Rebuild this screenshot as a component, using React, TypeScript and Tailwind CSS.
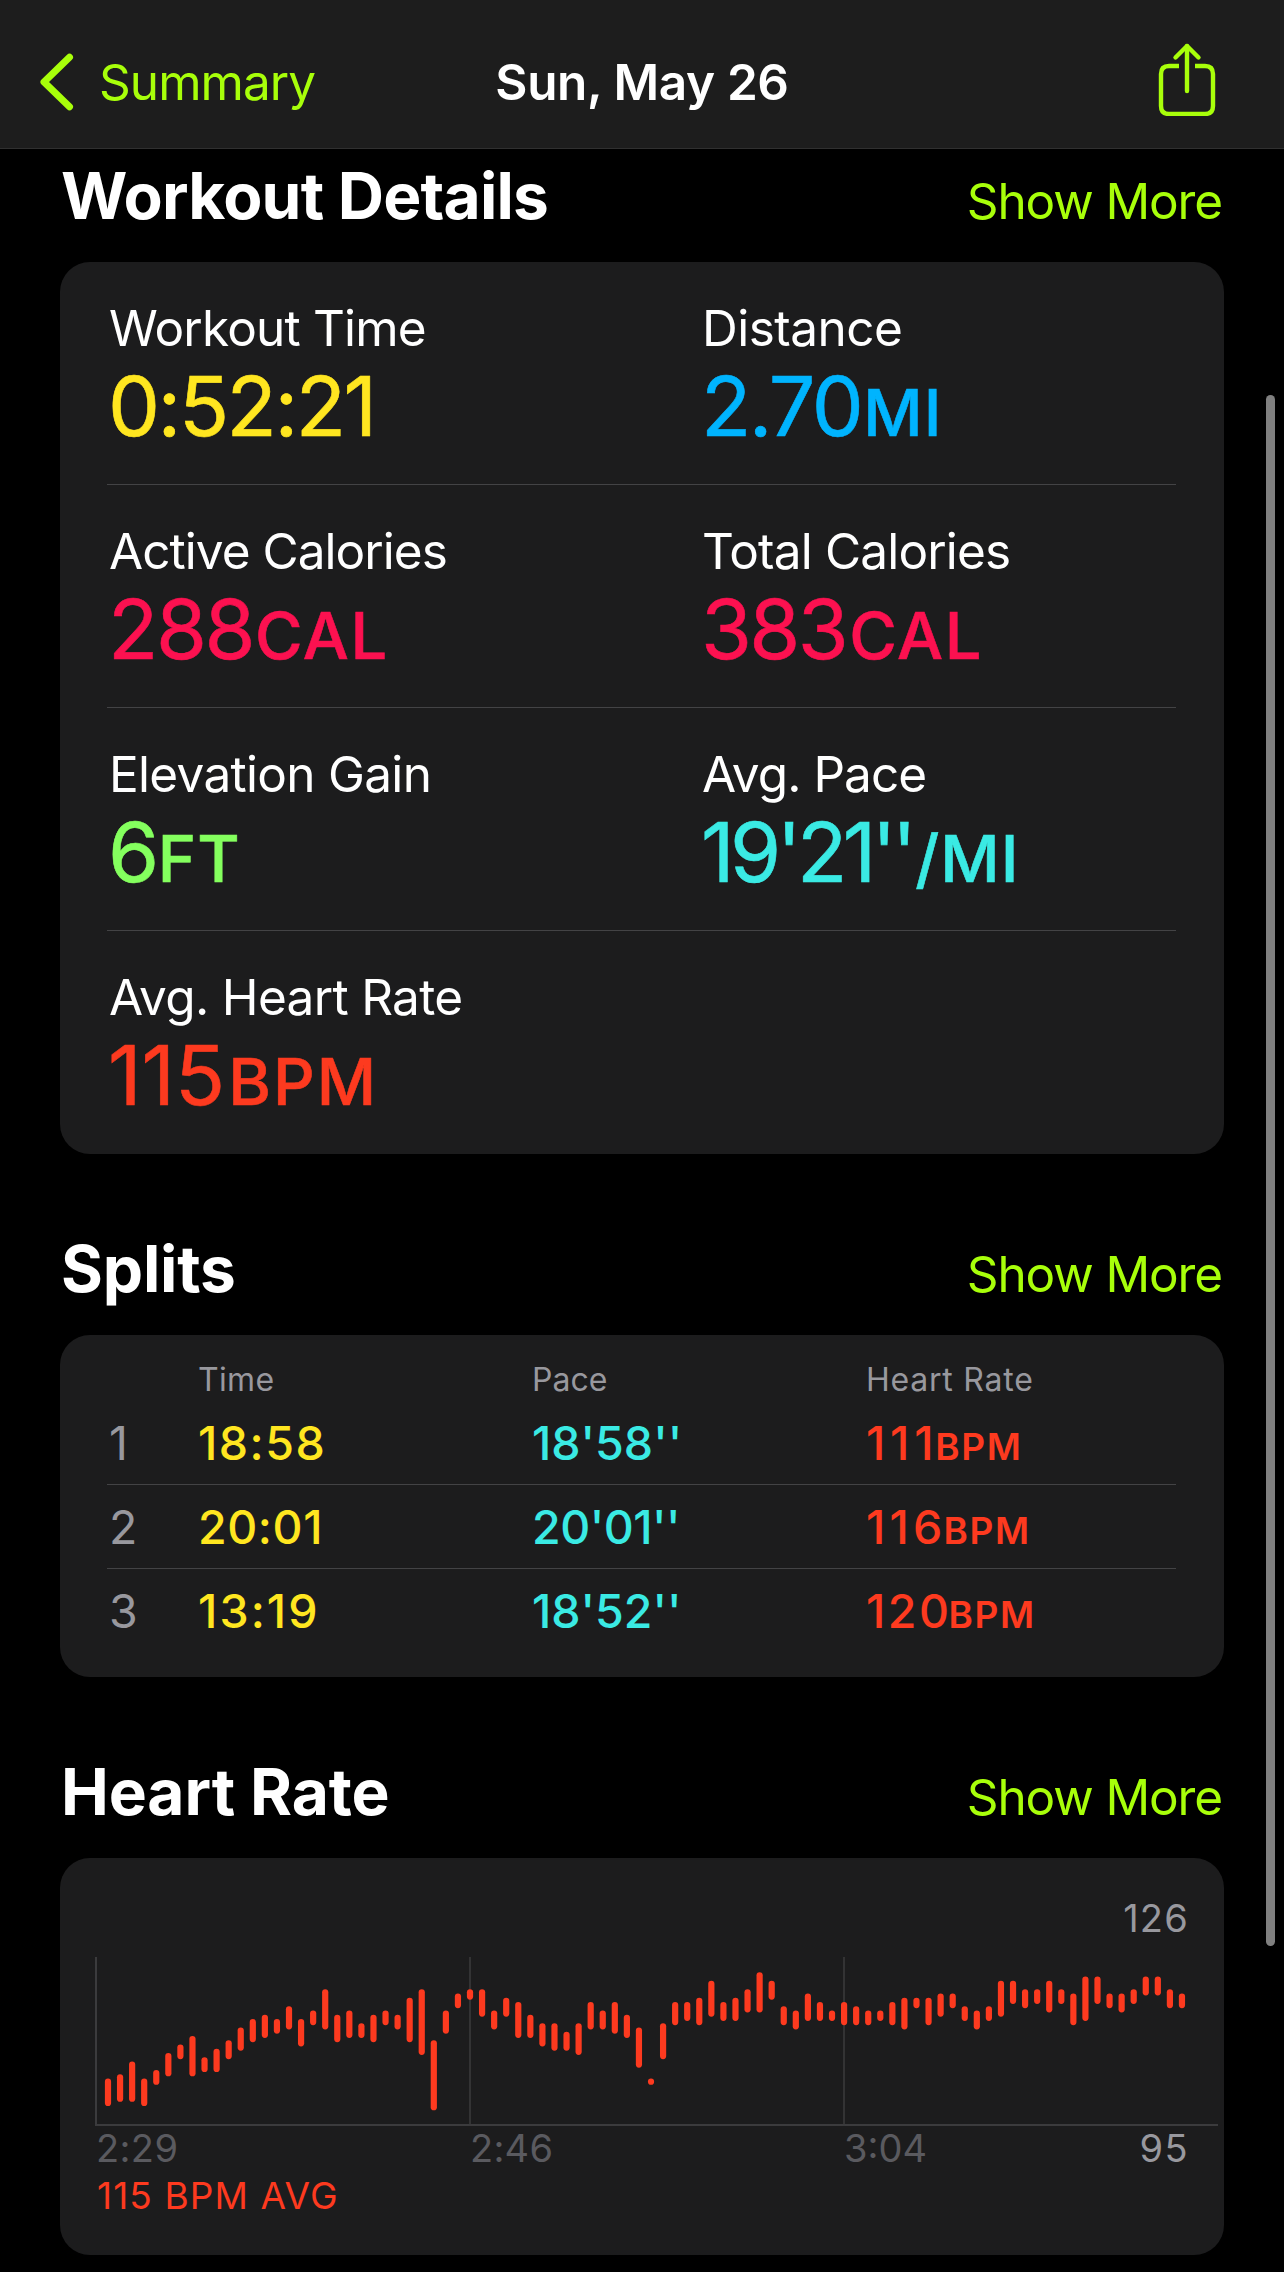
import React from 'react'

interface Metric {
  label: string
  labelClass: string
  value: string
  valueClass: string
  unit?: string
  unitClass?: string
}

const METRICS: Metric[] = [
  {
    label: 'Workout Time',
    labelClass: 'tracking-[-0.82px]',
    value: '0:52:21',
    valueClass: 'text-[#ffe620] tracking-[-2.46px]',
  },
  {
    label: 'Distance',
    labelClass: 'tracking-[-0.5px]',
    value: '2.70',
    valueClass: 'text-[#00b4fe] tracking-[-2.54px]',
    unit: 'MI',
    unitClass: 'text-[#00b4fe] tracking-[1.28px] ml-0.5',
  },
  {
    label: 'Active Calories',
    labelClass: 'tracking-[-0.96px]',
    value: '288',
    valueClass: 'text-[#fc1150] tracking-[-2.43px]',
    unit: 'CAL',
    unitClass: 'text-[#fc1150] tracking-[1.5px] ml-0.5',
  },
  {
    label: 'Total Calories',
    labelClass: 'tracking-[-0.83px]',
    value: '383',
    valueClass: 'text-[#fc1150] tracking-[-2.6px]',
    unit: 'CAL',
    unitClass: 'text-[#fc1150] tracking-[1.69px] ml-[3px]',
  },
  {
    label: 'Elevation Gain',
    labelClass: 'tracking-[-0.7px]',
    value: '6',
    valueClass: 'text-[#84ff5e] tracking-[-2.5px]',
    unit: 'FT',
    unitClass: 'text-[#84ff5e] tracking-[1.39px] ml-px',
  },
  {
    label: 'Avg. Pace',
    labelClass: 'tracking-[-0.95px]',
    value: "19'21''",
    valueClass: 'text-[#3aeae4] tracking-[-4.5px]',
    unit: '/MI',
    unitClass: 'text-[#3aeae4] tracking-[1px] ml-[3px]',
  },
  {
    label: 'Avg. Heart Rate',
    labelClass: 'tracking-[-0.68px]',
    value: '115',
    valueClass: 'text-[#fd3a1f]',
    unit: 'BPM',
    unitClass: 'text-[#fd3a1f] tracking-[2px] ml-[3px]',
  },
]

const SPLITS = [
  {
    time: '18:58',
    timeClass: 'tracking-[1.5px]',
    pace: "18'58''",
    paceClass: 'tracking-[0px]',
    bpm: '111',
    bpmClass: 'tracking-[4.8px]',
  },
  {
    time: '20:01',
    timeClass: 'tracking-[0.6px]',
    pace: "20'01''",
    paceClass: 'tracking-[-0.5px]',
    bpm: '116',
    bpmClass: 'tracking-[4.2px]',
  },
  {
    time: '13:19',
    timeClass: 'tracking-[2.1px]',
    pace: "18'52''",
    paceClass: 'tracking-[0px]',
    bpm: '120',
    bpmClass: 'tracking-[2.52px]',
  },
]

// [high, low] bpm for each sample
const HEART_RATE: [number, number][] = [
  [101, 96], [102, 97], [105, 97], [101, 96], [103, 101], [107, 103], [109, 107], [111, 103],
  [106, 104], [108, 104], [110, 107], [113, 109], [115, 111], [116, 112], [115, 113], [118, 114],
  [115, 110], [117, 115], [122, 114], [116, 111], [117, 112], [114, 112], [116, 111], [117, 115],
  [116, 114], [120, 111], [122, 108], [110, 95], [117, 113], [121, 119], [122, 121], [122, 117],
  [117, 114], [120, 117], [119, 112], [116, 112], [114, 110], [114, 109], [112, 109], [114, 108],
  [119, 114], [117, 114], [119, 113], [116, 112], [113, 105], [101, 101], [114, 107], [119, 115],
  [119, 116], [120, 115], [124, 117], [119, 116], [120, 116], [122, 118], [126, 118], [124, 121],
  [118, 115], [117, 114], [121, 116], [119, 116], [117, 116], [119, 115], [118, 115], [117, 115],
  [117, 116], [119, 115], [120, 114], [120, 119], [120, 115], [121, 117], [121, 119], [118, 116],
  [117, 114], [118, 116], [124, 117], [124, 120], [122, 119], [122, 120], [124, 118], [122, 120],
  [121, 115], [125, 116], [125, 120], [121, 119], [121, 118], [122, 120], [125, 122], [125, 122],
  [122, 119], [121, 119],
]

const barX = (i: number) => 12 + i * 12.067
const barY = (bpm: number) => 18.3 + (126 - bpm) * 4.253

function HeartRateChart() {
  return (
    <svg width="1123" height="170" viewBox="0 0 1123 170" className="mt-[19px] ml-9 block overflow-visible">
      <g stroke="#3b3b3d" strokeWidth="2">
        <path d="M-1 168H1122" />
        <path d="M0 0V169" />
        <path d="M374 0V169" strokeWidth="1.5" />
        <path d="M748 0V169" strokeWidth="1.5" />
      </g>
      <g stroke="#fd3a1f" strokeWidth="6.2" strokeLinecap="round">
        {HEART_RATE.map(([high, low], i) => (
          <line key={i} x1={barX(i)} x2={barX(i)} y1={barY(high)} y2={barY(low) + 0.01} />
        ))}
      </g>
    </svg>
  )
}

interface SectionProps {
  title: string
  titleClass: string
  children: React.ReactNode
}

function Section({ title, titleClass, children }: SectionProps) {
  return (
    <section>
      <div className="flex items-baseline justify-between h-16 mb-[34px] pl-px pr-0.5">
        <h2 className={`text-[64px] leading-[64px] font-bold text-white ${titleClass}`}>{title}</h2>
        <a href="#" className="text-[49.5px] leading-[50px] tracking-[-1.12px] text-[#a8ff0a]">
          Show More
        </a>
      </div>
      <div className="bg-[#1c1c1d] rounded-[30px] overflow-hidden">{children}</div>
    </section>
  )
}

function MetricCell({ metric }: { metric: Metric }) {
  return (
    <div className="pt-[41px]">
      <p className={`text-[49.5px] leading-[50px] text-white ${metric.labelClass}`}>{metric.label}</p>
      <p className="mt-[13px] -ml-px flex items-baseline h-20 [-webkit-text-stroke:0.6px]">
        <span className={`text-[82.5px] leading-[80px] ${metric.valueClass}`}>{metric.value}</span>
        {metric.unit && (
          <span className={`text-[65px] leading-[65px] font-medium ${metric.unitClass}`}>{metric.unit}</span>
        )}
      </p>
    </div>
  )
}

export default function App() {
  const rows = [METRICS.slice(0, 2), METRICS.slice(2, 4), METRICS.slice(4, 6), METRICS.slice(6)]

  return (
    <div className="relative w-[1284px] h-[2272px] overflow-hidden bg-black font-['Inter',sans-serif] whitespace-nowrap">
      {/* Nav bar */}
      <header className="h-[149px] pt-4 px-10 grid grid-cols-[1fr_auto_1fr] items-center bg-[#1d1d1d] border-b border-[#303030]">
        <a href="#" className="flex items-center text-[#a8ff0a]">
          <svg width="34" height="58" viewBox="0 0 34 58" fill="none" className="shrink-0">
            <path
              d="M29.5 4.2L4 29L29.5 53.8"
              stroke="currentColor"
              strokeWidth="7"
              strokeLinecap="round"
              strokeLinejoin="round"
            />
          </svg>
          <span className="ml-[25px] text-[49.5px] leading-[50px] tracking-[-0.95px]">Summary</span>
        </a>
        <h1 className="text-[49.5px] leading-[50px] font-semibold tracking-[-0.37px] text-white">Sun, May 26</h1>
        <a href="#" className="justify-self-end -mt-1.5 mr-[27px] text-[#a8ff0a]">
          <svg width="60" height="74" viewBox="0 0 60 74" fill="none">
            <g stroke="currentColor" strokeWidth="4.4" strokeLinecap="round" strokeLinejoin="round">
              <path d="M30 4V49" />
              <path d="M18.5 15.5L30 4L41.5 15.5" />
            </g>
            <path
              d="M22 24H12Q4 24 4 32V64Q4 72 12 72H48Q56 72 56 64V32Q56 24 48 24H38"
              stroke="currentColor"
              strokeWidth="4.4"
            />
          </svg>
        </a>
      </header>

      <main className="pt-[15px] px-[60px] flex flex-col gap-[83px]">
        <Section title="Workout Details" titleClass="tracking-[-0.77px]">
          <div className="ml-[47px] mr-12 divide-y divide-[#434345]">
            {rows.map((row, i) => (
              <div key={i} className="h-[223px] pl-0.5 grid grid-cols-[593px_1fr]">
                {row.map((metric) => (
                  <MetricCell key={metric.label} metric={metric} />
                ))}
              </div>
            ))}
          </div>
        </Section>

        <Section title="Splits" titleClass="tracking-[-0.18px]">
          <div className="ml-[47px] mr-12 pt-[29px] pb-6">
            <div className="h-[37px] grid grid-cols-[91px_334px_334px_1fr] text-[32px] leading-8 text-[#98989e]">
              <span />
              <span className="tracking-[0.32px]">Time</span>
              <span>Pace</span>
              <span className="tracking-[0.77px]">Heart Rate</span>
            </div>
            <div className="divide-y divide-[#434345]">
              {SPLITS.map((split, i) => (
                <div
                  key={split.time}
                  className="h-[84px] grid grid-cols-[91px_334px_334px_1fr] items-center text-[46.5px] leading-[46px] font-medium"
                >
                  <span className="pl-0.5 font-normal text-[#98989e]">{i + 1}</span>
                  <span className={`text-[#ffe620] ${split.timeClass}`}>{split.time}</span>
                  <span className={`text-[#3aeae4] ${split.paceClass}`}>{split.pace}</span>
                  <span className="flex items-baseline text-[#fd3a1f]">
                    <span className={split.bpmClass}>{split.bpm}</span>
                    <span className="-ml-[3px] text-[37px] leading-9 font-semibold tracking-[1.6px]">BPM</span>
                  </span>
                </div>
              ))}
            </div>
          </div>
        </Section>

        <Section title="Heart Rate" titleClass="tracking-[-0.1px]">
          <div className="h-[397px] pt-10 text-[38px] leading-10">
            <p className="pr-[35px] text-right tracking-[1.2px] text-[#98989e]">126</p>
            <HeartRateChart />
            <div className="mt-px pl-9 pr-[35px] grid grid-cols-[374px_374px_1fr_auto] text-[#5a5a5f]">
              <span className="tracking-[0.37px]">2:29</span>
              <span className="tracking-[0.24px]">2:46</span>
              <span>3:04</span>
              <span className="tracking-[1.44px] text-[#98989e]">95</span>
            </div>
            <p className="mt-2 pl-[37px] text-[37px] tracking-[1.1px] text-[#fd3a1f]">115 BPM AVG</p>
          </div>
        </Section>
      </main>

      {/* Scroll indicator */}
      <div className="absolute top-[395px] right-[9px] w-[9px] h-[1551px] rounded-full bg-[#808080]" />
    </div>
  )
}
